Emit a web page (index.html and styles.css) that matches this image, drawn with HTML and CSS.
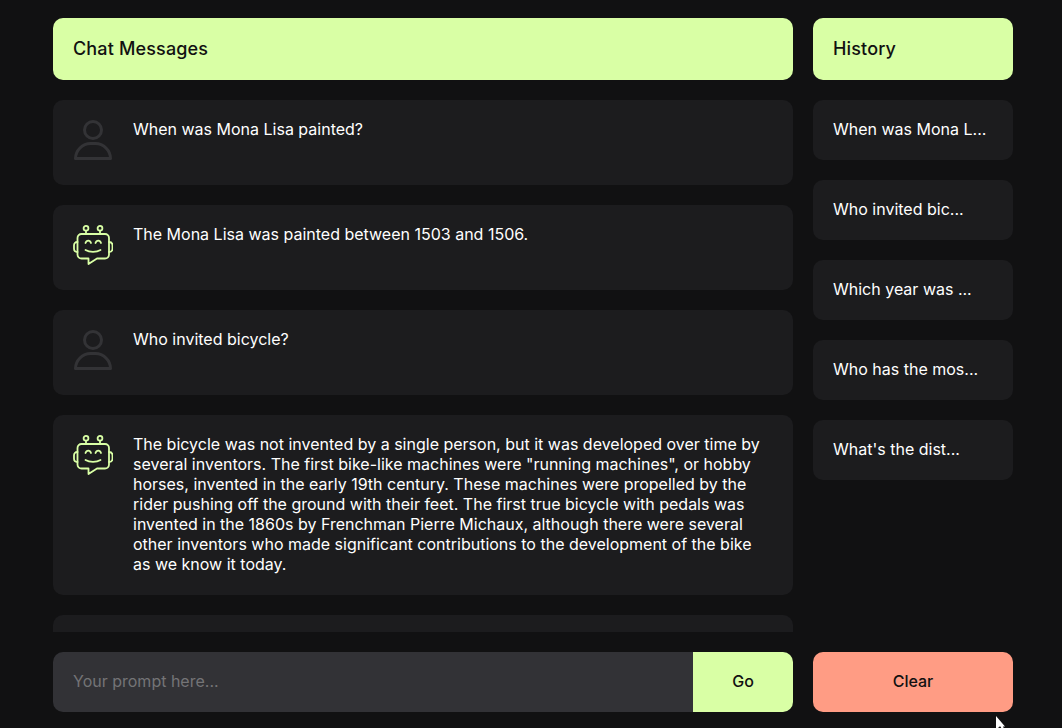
FILE: index.html
```html
<!DOCTYPE html>
<html lang="en">
<head>
  <meta charset="UTF-8">
  <title>Chat</title>
  <link rel="stylesheet" href="styles.css">
</head>
<body>
  <div class="container">
    <div class="main">
      <div class="title">Chat Messages</div>
      <div class="messages">
        <div class="message">
          <svg class="avatar" viewBox="0 0 40 40" fill="none" stroke="#333336" stroke-width="3" stroke-linejoin="round"><circle cx="20" cy="10" r="8.500"/><path d="M2.500 38.500c0-8 7-15 15-15h5c8 0 15 7 15 15z"/></svg>
          <div class="text">When was Mona Lisa painted?</div>
        </div>
        <div class="message">
          <svg class="avatar" viewBox="0 0 40 40" fill="none" stroke="#d9ffa5" stroke-width="1.8" stroke-linecap="round" stroke-linejoin="round"><circle cx="13" cy="3.300" r="2.400"/><circle cx="27" cy="3.300" r="2.400"/><path d="M13 5.700v3.300M27 5.700v3.300M8.500 9h23.500a4 4 0 0 1 4 4v16.500a4 4 0 0 1-4 4H24L15.500 39v-5.500H8.500a4 4 0 0 1-4-4V13a4 4 0 0 1 4-4z"/><path d="M4.500 17c-2.500 0-3.500 1.500-3.500 3.500v3c0 2 1 3.500 3.500 3.500M36 17c2.500 0 3.500 1.500 3.500 3.500v3c0 2-1 3.500-3.500 3.500"/><path d="M12.500 18c1-3.200 4.500-3.200 5.500 0M22.500 18c1-3.200 4.500-3.200 5.500 0M12.500 25c4 2.500 11 2.500 15 0"/></svg>
          <div class="text">The Mona Lisa was painted between 1503 and 1506.</div>
        </div>
        <div class="message">
          <svg class="avatar" viewBox="0 0 40 40" fill="none" stroke="#333336" stroke-width="3" stroke-linejoin="round"><circle cx="20" cy="10" r="8.500"/><path d="M2.500 38.500c0-8 7-15 15-15h5c8 0 15 7 15 15z"/></svg>
          <div class="text">Who invited bicycle?</div>
        </div>
        <div class="message">
          <svg class="avatar" viewBox="0 0 40 40" fill="none" stroke="#d9ffa5" stroke-width="1.8" stroke-linecap="round" stroke-linejoin="round"><circle cx="13" cy="3.300" r="2.400"/><circle cx="27" cy="3.300" r="2.400"/><path d="M13 5.700v3.300M27 5.700v3.300M8.500 9h23.500a4 4 0 0 1 4 4v16.500a4 4 0 0 1-4 4H24L15.500 39v-5.500H8.500a4 4 0 0 1-4-4V13a4 4 0 0 1 4-4z"/><path d="M4.500 17c-2.500 0-3.500 1.500-3.500 3.500v3c0 2 1 3.500 3.500 3.500M36 17c2.500 0 3.500 1.500 3.500 3.500v3c0 2-1 3.500-3.500 3.500"/><path d="M12.500 18c1-3.200 4.500-3.200 5.500 0M22.500 18c1-3.200 4.500-3.200 5.500 0M12.500 25c4 2.500 11 2.500 15 0"/></svg>
          <div class="text">The bicycle was not invented by a single person, but it was developed over time by<br>several inventors. The first bike-like machines were "running machines", or hobby<br>horses, invented in the early 19th century. These machines were propelled by the<br>rider pushing off the ground with their feet. The first true bicycle with pedals was<br>invented in the 1860s by Frenchman Pierre Michaux, although there were several<br>other inventors who made significant contributions to the development of the bike<br>as we know it today.</div>
        </div>
        <div class="message"></div>
      </div>
      <div class="prompt">
        <input class="prompt-input" type="text" placeholder="Your prompt here...">
        <button class="go">Go</button>
      </div>
    </div>
    <div class="side">
      <div class="title">History</div>
      <div class="history">
        <div class="history-item">When was Mona L...</div>
        <div class="history-item">Who invited bic...</div>
        <div class="history-item">Which year was ...</div>
        <div class="history-item">Who has the mos...</div>
        <div class="history-item">What's the dist...</div>
      </div>
      <button class="clear">Clear</button>
    </div>
  </div>
  <svg class="cursor" viewBox="0 0 12 14"><path d="M0 0v14l3.500-3.500h5.500z" fill="#fff"/><path d="M4 9l2 5 2-1-2-5z" fill="#fff"/></svg>
</body>
</html>
```

FILE: styles.css
```css
/* Global Styles */
html, body {
  height: 100%;
}
body {
  font-family: Inter, sans-serif;
  font-size: 16px;
  line-height: 20px;
  background-color: #111112;
  color: #fff;
  margin: 0;
  overflow: hidden;
}
.container {
  display: flex;
  gap: 20px;
  width: 960px;
  height: 694px;
  margin-left: 53px;
  padding-top: 18px;
}
.main {
  width: 740px;
  display: flex;
  flex-direction: column;
}
.side {
  width: 200px;
  display: flex;
  flex-direction: column;
}
.title {
  background-color: #d9ffa5;
  color: #111;
  font-size: 18px;
  font-weight: 500;
  letter-spacing: 0.15px;
  height: 62px;
  line-height: 62px;
  padding: 0 20px;
  border-radius: 10px;
  flex-shrink: 0;
}
/* Messages */
.messages {
  height: 532px;
  margin: 20px 0;
  overflow: hidden;
}
.message {
  background-color: #1c1c1e;
  border-radius: 10px;
  padding: 20px;
  min-height: 45px;
  margin-bottom: 20px;
  display: flex;
  gap: 20px;
}
.avatar {
  width: 40px;
  height: 40px;
  flex-shrink: 0;
}
.text {
  white-space: nowrap;
  margin-top: -1px;
  padding-bottom: 1px;
}
/* History */
.history {
  flex: 1;
  margin-top: 20px;
}
.history-item {
  background-color: #1c1c1e;
  border-radius: 10px;
  height: 60px;
  line-height: 58px;
  padding: 0 20px;
  margin-bottom: 20px;
}
/* Prompt */
.prompt {
  display: flex;
  height: 60px;
}
.prompt-input {
  flex: 1;
  min-width: 0;
  background-color: #323236;
  border: 0;
  border-radius: 10px 0 0 10px;
  padding: 0 20px 2px;
  color: #fff;
  font: 16px Inter, sans-serif;
}
.prompt-input::placeholder {
  color: #747476;
}
.go, .clear {
  border: 0;
  height: 60px;
  padding: 0 0 2px;
  color: #111;
  font: 500 16px Inter, sans-serif;
}
.go {
  width: 100px;
  background-color: #d9ffa5;
  border-radius: 0 10px 10px 0;
}
.clear {
  width: 200px;
  background-color: #ff9c84;
  border-radius: 10px;
}
.cursor {
  position: absolute;
  left: 996px;
  top: 716px;
  width: 12px;
  height: 14px;
}
```
